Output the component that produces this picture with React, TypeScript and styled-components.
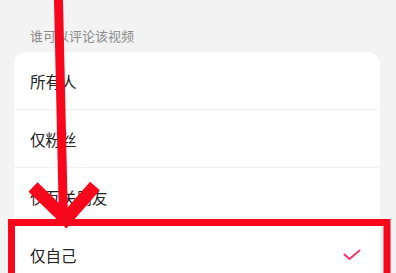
import styled, { createGlobalStyle } from "styled-components";

const GlobalStyle = createGlobalStyle`
  html, body {
    margin: 0;
    padding: 0;
    background: #f3f3f3;
  }
  body {
    font-family: "Noto Sans CJK SC", "Noto Sans", sans-serif;
  }
`;

const Page = styled.div`
  position: relative;
  width: 396px;
  height: 273px;
  overflow: hidden;
  background: #f3f3f3;
  padding: 0 16px 0 14px;
  box-sizing: border-box;
`;

const SectionTitle = styled.div`
  padding: 28px 16px 8px;
  font-size: 13px;
  line-height: 16px;
  color: #8a8a8a;
`;

const Card = styled.div`
  background: #ffffff;
  border-radius: 12px;
  overflow: hidden;
`;

const Option = styled.div<{ $last?: boolean }>`
  display: flex;
  align-items: center;
  justify-content: space-between;
  height: 57px;
  padding: 0 19px 0 16px;
  font-size: 15.5px;
  color: #222222;
  border-bottom: ${(p) => (p.$last ? "none" : "1px solid #f1f1f1")};
`;

const Check = styled.svg`
  width: 18px;
  height: 12px;
`;

const Annotation = styled.svg`
  position: absolute;
  left: 0;
  top: 0;
  width: 396px;
  height: 273px;
  pointer-events: none;
`;

const options = ["所有人", "仅粉丝", "仅互关朋友", "仅自己"];

function App() {
  return (
    <Page>
      <GlobalStyle />
      <SectionTitle>谁可以评论该视频</SectionTitle>
      <Card>
        {options.map((o, i) => (
          <Option key={o} $last={i === options.length - 1}>
            <span>{o}</span>
            {i === options.length - 1 && (
              <Check viewBox="0 0 18 12">
                <polyline
                  points="1.5,5.5 6.5,10 16.5,1.5"
                  fill="none"
                  stroke="#f0386b"
                  strokeWidth="2"
                  strokeLinecap="round"
                  strokeLinejoin="round"
                />
              </Check>
            )}
          </Option>
        ))}
      </Card>
      <Annotation viewBox="0 0 396 273">
        <polygon points="54,0 63,0 68,222 59,222" fill="#f8071c" />
        <polyline
          points="33,187 66,219 95,186"
          fill="none"
          stroke="#f8071c"
          strokeWidth="13"
          strokeLinejoin="miter"
        />
        <rect
          x="11.5"
          y="222.5"
          width="375.5"
          height="100"
          fill="none"
          stroke="#f8071c"
          strokeWidth="7"
        />
      </Annotation>
    </Page>
  );
}

export default App;
